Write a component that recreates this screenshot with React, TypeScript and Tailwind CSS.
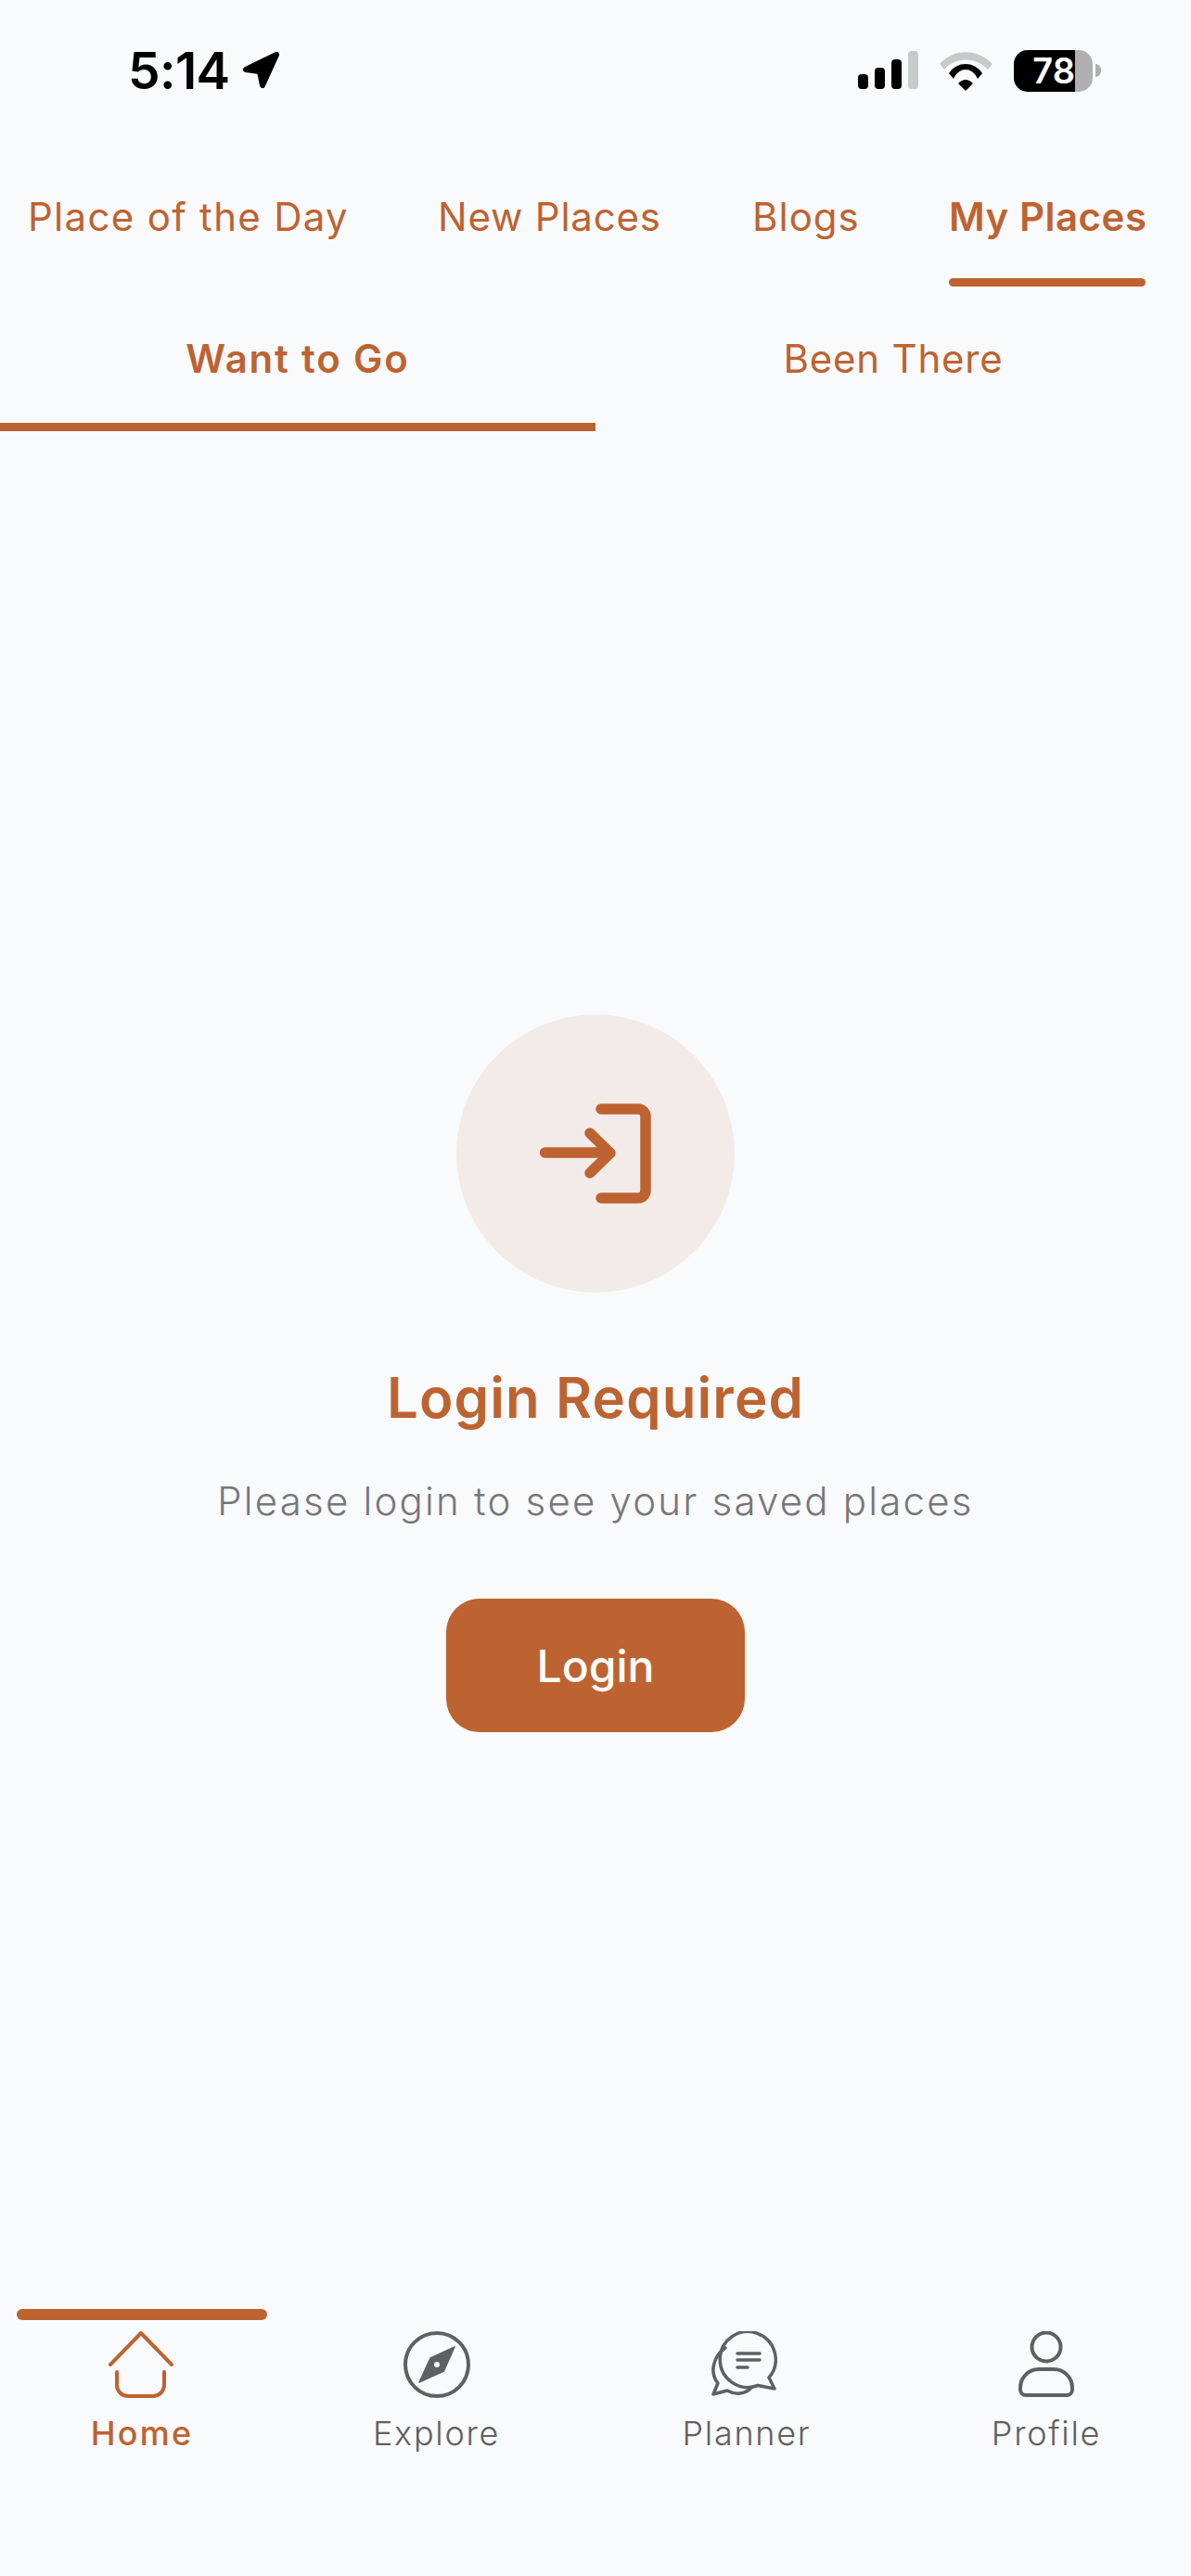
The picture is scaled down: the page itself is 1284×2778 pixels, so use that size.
import React from "react";

const topTabs = [
  { label: "Place of the Day", width: "w-[344px]", gap: "ml-[30px]", track: "tracking-[1.3px]" },
  { label: "New Places", width: "w-[239px]", gap: "ml-[98px]", track: "tracking-[0.8px]" },
  { label: "Blogs", width: "w-[114px]", gap: "ml-[100px]", track: "tracking-[1px]" },
  { label: "My Places", width: "w-[212px]", gap: "ml-[98px]", track: "tracking-[0.5px]", active: true },
];

const HomeIcon = () => (
  <svg width="72" height="72" viewBox="0 0 72 72" fill="none" stroke="#bd6331" strokeWidth="4" strokeLinecap="round" strokeLinejoin="round">
    <path d="M2 36 L35 2 L68 36" />
    <path d="M9 44 V58 a12 12 0 0 0 12 12 H48 a12 12 0 0 0 12 -12 V44" />
  </svg>
);

const CompassIcon = () => (
  <svg width="72" height="72" viewBox="0 0 72 72" fill="none">
    <circle cx="36" cy="36" r="34" stroke="#5f6062" strokeWidth="4" />
    <path d="M55 17 L29 29 L17 55 L43.5 43 Z" fill="#5f6062" stroke="#5f6062" strokeWidth="1.5" strokeLinejoin="round" />
    <circle cx="36" cy="36" r="3" fill="#f9fafc" />
  </svg>
);

const PlannerIcon = () => (
  <svg className="mr-[6px]" width="72" height="72" viewBox="0 0 72 72" fill="none" stroke="#5f6062" strokeWidth="3.5" strokeLinecap="round" strokeLinejoin="round">
    <path d="M63 50 A30 30 0 1 0 51 58.5 L69 62 Z" />
    <path d="M16 18 C4 26 -2 44 8 56 L3 68 L18 64 C27 69 37 68 44 61" />
    <path d="M29 24 H53 M29 31 H53 M29 39 H40" />
  </svg>
);

const ProfileIcon = () => (
  <svg width="60" height="72" viewBox="0 0 60 72" fill="none" stroke="#5f6062" strokeWidth="4">
    <circle cx="30" cy="17" r="15.5" />
    <path d="M22 41 H38 A20 20 0 0 1 58 61 V63 A6 6 0 0 1 52 69 H8 A6 6 0 0 1 2 63 V61 A20 20 0 0 1 22 41 Z" />
  </svg>
);

const navItems = [
  { label: "Home", icon: <HomeIcon />, gap: "ml-[18px]", active: true },
  { label: "Explore", icon: <CompassIcon />, gap: "ml-[47.5px]" },
  { label: "Planner", icon: <PlannerIcon />, gap: "ml-[64.5px]" },
  { label: "Profile", icon: <ProfileIcon />, gap: "ml-[53px]" },
];

const StatusBar = () => (
  <div className="flex h-[152px] items-center justify-between pl-[138px] pr-[97px] font-['Inter',sans-serif]">
    <div className="flex items-center gap-[13px]">
      <span className="text-[55px] leading-[60px] font-semibold tracking-[-0.6px] text-black">5:14</span>
      <svg width="41" height="41" viewBox="0 0 41 41" fill="#000" stroke="#000" strokeWidth="6" strokeLinejoin="round">
        <path d="M4 19 L37 3 L22 36 L19 21 Z" />
      </svg>
    </div>
    <div className="flex items-center">
      <svg width="66" height="42" viewBox="0 0 66 42">
        <rect x="0" y="25" width="11" height="16" rx="4" fill="#000" />
        <rect x="18" y="18" width="11" height="23" rx="4" fill="#000" />
        <rect x="36" y="9" width="11" height="32" rx="4" fill="#000" />
        <rect x="54" y="0" width="11" height="41" rx="4" fill="#c8cac9" />
      </svg>
      <svg className="ml-[19px]" width="62" height="48" viewBox="0 0 62 48">
        <path d="M3 17 C18 0 44 0 60 17 L55 23 C42 9 20 9 8 23 Z" fill="#c8cac9" />
        <path d="M13 27 C22 13.7 40 13.7 49 27 L44 33 C38 19.7 24 19.7 18 33 Z" fill="#000" />
        <path d="M23 38 Q31 30 39 38 L31 46 Z" fill="#000" />
      </svg>
      <div className="ml-[21px] flex h-[45px] w-[85px] overflow-hidden rounded-[15px] bg-[#b0b0b2]">
        <div className="flex h-full w-[66px] items-center justify-end bg-black text-[38px] leading-none font-semibold text-white">
          78
        </div>
      </div>
      <div className="ml-[3px] h-[14px] w-[6px] rounded-r-full bg-[#b0b0b2]" />
    </div>
  </div>
);

const App: React.FC = () => {
  return (
    <div className="flex h-[2778px] w-full flex-col overflow-hidden bg-[#f9fafc] font-['Inter',sans-serif]">
      <StatusBar />

      {/* Top tabs */}
      <div className="flex">
        {topTabs.map((tab) => (
          <div key={tab.label} className={`${tab.gap} ${tab.width} flex flex-col pt-[52px]`}>
            <span
              className={`h-[60px] text-center text-[42px] leading-[60px] whitespace-nowrap text-[#bd6331] ${tab.track} ${
                tab.active ? "font-semibold" : "font-normal"
              }`}
            >
              {tab.label}
            </span>
            <div className={`mt-[36px] h-[9px] rounded-full ${tab.active ? "bg-[#bd6331]" : ""}`} />
          </div>
        ))}
      </div>

      {/* Want to go / been there */}
      <div className="grid grid-cols-2">
        <div className="flex h-[156px] flex-col justify-between pt-[48px]">
          <span className="text-center text-[42px] leading-[60px] font-semibold tracking-[1.8px] text-[#bd6331]">Want to Go</span>
          <div className="h-[9px] bg-[#bd6331]" />
        </div>
        <div className="flex h-[156px] flex-col justify-between pt-[48px]">
          <span className="text-center text-[42px] leading-[60px] tracking-[0.8px] text-[#bd6331]">Been There</span>
        </div>
      </div>

      <main className="flex flex-1 flex-col items-center justify-center pt-[7px]">
        <div className="flex h-[300px] w-[300px] items-center justify-center rounded-full bg-[#f3ebe7]">
          <svg width="128" height="108" viewBox="0 0 128 108" fill="none" stroke="#bd6331" strokeWidth="11.5" strokeLinecap="round" strokeLinejoin="round">
            <path d="M9.5 53 H78" />
            <path d="M58 32 L80 53.5 L58 75" />
            <path d="M70 6 H110 a8 8 0 0 1 8 8 V94 a8 8 0 0 1 -8 8 H70" />
          </svg>
        </div>
        <h1 className="mt-[71px] text-[60px] leading-[84px] font-semibold tracking-[1.1px] text-[#bd6331]">Login Required</h1>
        <p className="mt-[40px] text-[42px] leading-[60px] font-light tracking-[2.2px] text-[#76777a]">
          Please login to see your saved places
        </p>
        <button className="mt-[75px] flex h-[144px] w-[322px] items-center justify-center rounded-[36px] bg-[#bd6331] pt-[2px] text-[48px] font-medium text-white">
          Login
        </button>
      </main>

      {/* Bottom nav */}
      <nav className="flex h-[288px]">
        {navItems.map((item) => (
          <div key={item.label} className={`${item.gap} flex w-[270px] flex-col items-center`}>
            <div className={`h-[12px] w-full rounded-full ${item.active ? "bg-[#bd6331]" : ""}`} />
            <div className="mt-[12px] flex h-[72px] items-center justify-center">{item.icon}</div>
            <span
              className={`mt-[14px] text-[36px] leading-[48px] ${
                item.active ? "font-medium tracking-[2.2px] text-[#bd6331]" : "font-light tracking-[1.7px] text-[#5f6062]"
              }`}
            >
              {item.label}
            </span>
          </div>
        ))}
      </nav>
    </div>
  );
};

export default App;
